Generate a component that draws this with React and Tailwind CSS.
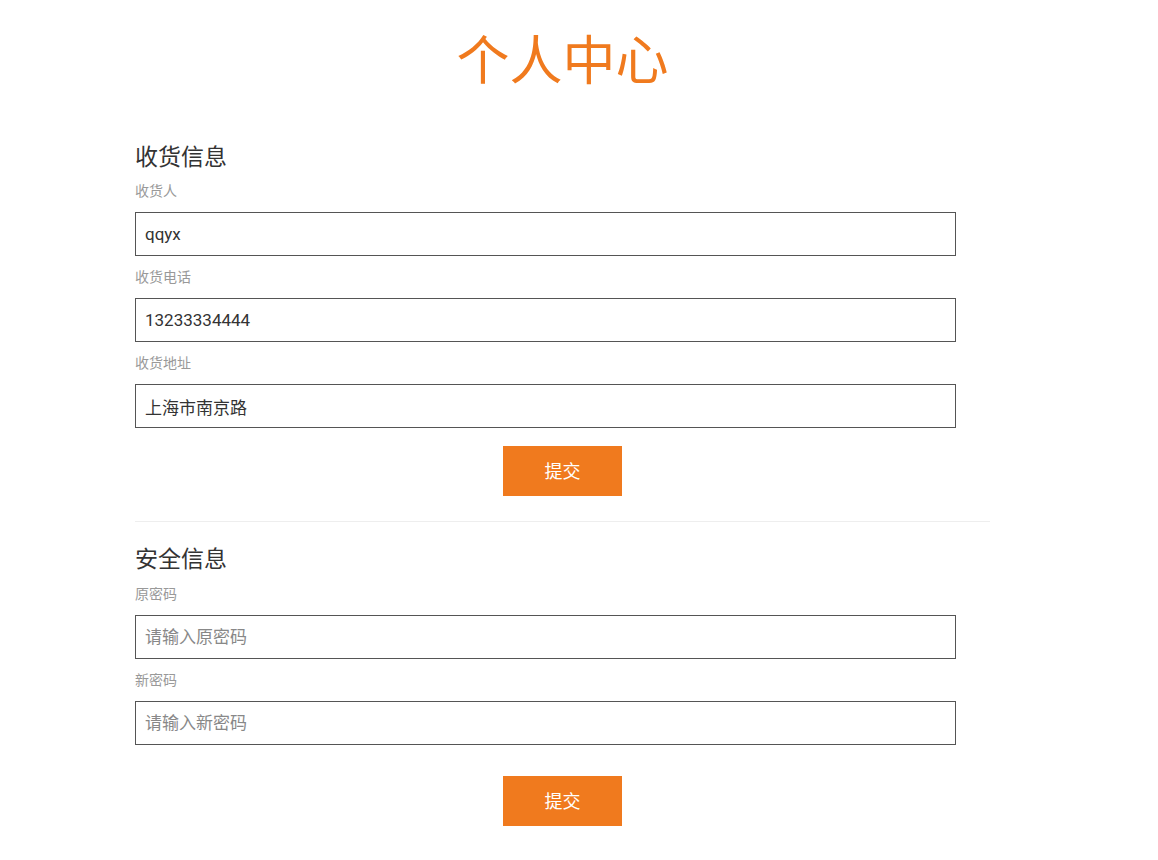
import React from 'react';

const font = { fontFamily: 'Roboto, "Noto Sans CJK SC", sans-serif' };

const Field = ({ label, value, placeholder }) => (
    <div>
        <div className="text-[14px] leading-[20px] text-[#999] mb-[11px]">{label}</div>
        <input
            defaultValue={value}
            placeholder={placeholder}
            className="block w-[96%] h-[44px] border border-[#555] px-[9px] text-[17px] text-[#333] placeholder:text-[#888] outline-none mb-[11px]"
        />
    </div>
);

const SubmitButton = () => (
    <div className="flex justify-center">
        <button className="w-[119px] h-[50px] bg-[#f07a1e] text-white text-[18px]">提交</button>
    </div>
);

export default function App() {
    return (
        <div className="bg-white min-h-screen" style={font}>
            <div className="ml-[135px] w-[855px]">
                <h1 className="text-center text-[#f07a1e] text-[53px] leading-[1] pt-[36px]">个人中心</h1>

                <div className="pt-[54px]">
                    {/* 收货信息 */}
                    <h2 className="text-[23px] leading-[30px] text-[#333] mb-[8px]">收货信息</h2>
                    <Field label="收货人" value="qqyx" />
                    <Field label="收货电话" value="13233334444" />
                    <Field label="收货地址" value="上海市南京路" />
                    <div className="pt-[7px]">
                        <SubmitButton />
                    </div>

                    <div className="border-t border-[#eee] mt-[25px]"></div>

                    {/* 安全信息 */}
                    <h2 className="text-[23px] leading-[30px] text-[#333] mt-[23px] mb-[9px]">安全信息</h2>
                    <Field label="原密码" placeholder="请输入原密码" />
                    <Field label="新密码" placeholder="请输入新密码" />
                    <div className="pt-[20px] pb-[30px]">
                        <SubmitButton />
                    </div>
                </div>
            </div>
        </div>
    );
}
